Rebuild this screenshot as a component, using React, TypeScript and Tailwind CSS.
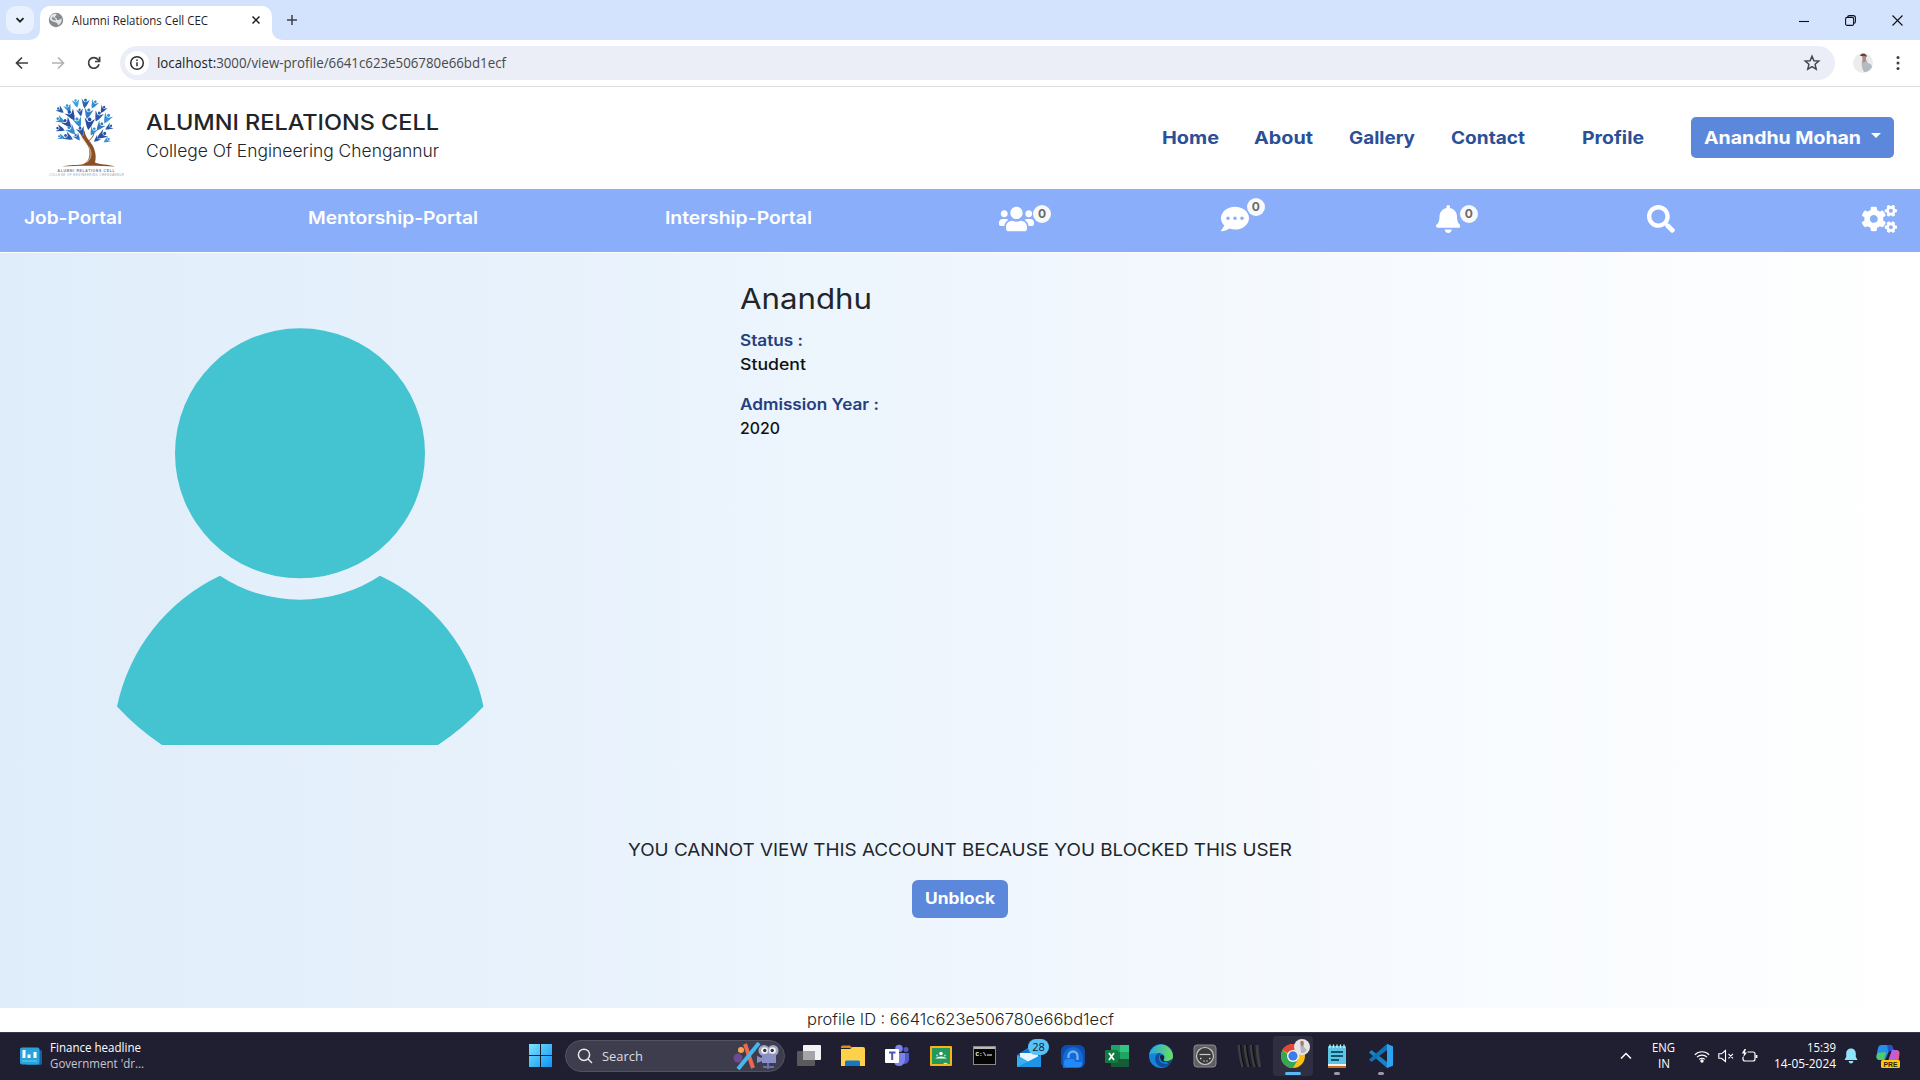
import { useLayoutEffect, useRef, useState } from "react";
import type { ReactNode } from "react";
import { FaBell, FaCogs, FaCommentDots, FaSearch, FaUsers } from "react-icons/fa";

/* Single line of text stretched horizontally to fill its box. */
function Fit({ className = "", children }: { className?: string; children: ReactNode }) {
  const box = useRef<HTMLSpanElement>(null);
  const inner = useRef<HTMLSpanElement>(null);
  const [scale, setScale] = useState(1);
  useLayoutEffect(() => {
    if (box.current && inner.current && inner.current.offsetWidth) {
      const natural = parseFloat(getComputedStyle(inner.current).width);
      setScale(box.current.clientWidth / natural);
    }
  }, []);
  return (
    <span ref={box} className={"block shrink-0 whitespace-nowrap " + className}>
      <span ref={inner} className="inline-block origin-left" style={{ transform: `scaleX(${scale})` }}>
        {children}
      </span>
    </span>
  );
}

function TabStrip() {
  return (
    <div className="flex h-10 items-end bg-[#d3e3fd]">
      <div className="mb-[6px] ml-[6px] flex h-7 w-7 items-center justify-center rounded-[10px] bg-[#e9f1fe]">
        <svg viewBox="0 0 10 10" className="h-[10px] w-[10px]" fill="none" stroke="#1f1f1f" strokeWidth="1.8">
          <path d="M1.5 3.2 5 6.7l3.500-3.500" />
        </svg>
      </div>
      <div className="relative ml-[6px] flex h-[34px] w-[232px] items-center rounded-t-[10px] bg-white pb-[6px]">
        <svg viewBox="0 0 10 10" className="absolute bottom-0 -left-[10px] h-[10px] w-[10px]" fill="#fff">
          <path d="M10 0v10H0A10 10 0 0 0 10 0z" />
        </svg>
        <svg viewBox="0 0 10 10" className="absolute -right-[10px] bottom-0 h-[10px] w-[10px]" fill="#fff">
          <path d="M0 0v10h10A10 10 0 0 1 0 0z" />
        </svg>
        <svg viewBox="0 0 16 16" className="ml-2 h-4 w-4 shrink-0">
          <circle cx="8" cy="8" r="7.200" fill="#868b90" />
          <path d="M3 3.500c2-1.800 4-2 5.500-1.500C9 3.500 7 4 6.500 5.500 8 6 9.500 6.300 9 8c2 0 4-.5 4.500-2 .8 3-.5 6-3.500 7.500C10 12 9.500 11 8 10.500 6 10 3.500 9.500 2 7.500 2 6 2.300 4.500 3 3.500z" fill="#e4e6e8" />
          <path d="M5 4.500C4 5.500 3.500 7 5 8l3 .500C8.500 7 6 6.500 5 4.500z" fill="#868b90" />
        </svg>
        <Fit className="mt-px ml-2 w-[136px] font-['Open_Sans',sans-serif] text-[12.500px] leading-7 text-[#1f1f1f]">Alumni Relations Cell CEC</Fit>
        <svg viewBox="0 0 8 8" className="ml-11 h-2 w-2 shrink-0" stroke="#1f1f1f" strokeWidth="1.500">
          <path d="m.5.5 7 7m0-7-7 7" />
        </svg>
      </div>
      <svg viewBox="0 0 10 10" className="mb-[15px] ml-[15px] h-[10px] w-[10px]" stroke="#3c4043" strokeWidth="1.500">
        <path d="M5 0v10M0 5h10" />
      </svg>
      <div className="mb-[14px] ml-auto flex items-center gap-9 pr-[17px]">
        <svg viewBox="0 0 10 10" className="h-[10px] w-[10px]" stroke="#111" strokeWidth="1.100">
          <path d="M0 5.500h10" />
        </svg>
        <svg viewBox="0 0 11 11" className="h-[11px] w-[11px]" fill="none" stroke="#111" strokeWidth="1.100">
          <rect x=".6" y="2.400" width="8" height="8" rx="1.500" />
          <path d="M2.800 2.400V2q0-1.400 1.500-1.400h4q2.100 0 2.100 2.100v4q0 1.400-1.500 1.600" />
        </svg>
        <svg viewBox="0 0 11 11" className="h-[11px] w-[11px]" stroke="#111" strokeWidth="1.100">
          <path d="m.5.5 10 10m0-10-10 10" />
        </svg>
      </div>
    </div>
  );
}

function Toolbar() {
  return (
    <div className="flex h-[47px] items-center border-b border-[#dcdcde] bg-white pl-[14px]">
      <svg viewBox="0 0 16 16" className="h-4 w-4" fill="none" stroke="#3c4043" strokeWidth="1.700">
        <path d="M14 8H3m5-5.500L2.500 8 8 13.500" />
      </svg>
      <svg viewBox="0 0 16 16" className="ml-5 h-4 w-4" fill="none" stroke="#b1b3b5" strokeWidth="1.700">
        <path d="M2 8h11M8 2.500 13.500 8 8 13.500" />
      </svg>
      <svg viewBox="0 0 16 16" className="ml-5 h-4 w-4" fill="none" stroke="#3c4043" strokeWidth="1.700">
        <path d="M13 9.200A5.300 5.300 0 1 1 12 4.600l1.500 1.600" />
        <path d="M13.600 1.800v4.700H9" />
      </svg>
      <div className="ml-[18px] flex h-[34px] w-[1715px] items-center rounded-full bg-[#ebeef7] pl-[5px]">
        <span className="flex h-6 w-6 items-center justify-center rounded-full bg-white">
          <svg viewBox="0 0 16 16" className="h-4 w-4" fill="none" stroke="#2b2c2e" strokeWidth="1.500">
            <circle cx="8" cy="8" r="6.300" />
            <path d="M8 7.200v4M8 4.600v1.500" />
          </svg>
        </span>
        <Fit className="ml-2 w-[349px] font-['Open_Sans',sans-serif] text-[14px] leading-8 text-[#46494d]">
          <span className="text-[#1f1f1f]">localhost:</span>3000/view-profile/6641c623e506780e66bd1ecf
        </Fit>
        <svg viewBox="0 0 18 18" className="mr-[14px] ml-auto h-[18px] w-[18px]" fill="none" stroke="#44474a" strokeWidth="1.500">
          <path d="m9 2.200 1.900 4.500 4.900.4-3.700 3.200 1.100 4.800L9 12.600l-4.200 2.500 1.100-4.800-3.700-3.200 4.900-.4z" />
        </svg>
      </div>
      <svg viewBox="0 0 20 20" className="ml-[18px] h-5 w-5">
        <circle cx="10" cy="10" r="10" fill="#ececec" />
        <path d="M9 7c2-1 5-1 5 1l1 2c3 1 4 2 4 4-2 4-5 5-8 5-2-3-3-8-2-12z" fill="#b4bac1" />
        <path d="M9 3h4v5l-3 2z" fill="#b58c7c" />
        <path d="M7 3C8-1 14 0 14 4l-2-1z" fill="#5a4644" />
      </svg>
      <svg viewBox="0 0 4 16" className="ml-[23px] h-4 w-1" fill="#3c4043">
        <circle cx="2" cy="2.500" r="1.500" />
        <circle cx="2" cy="8" r="1.500" />
        <circle cx="2" cy="13.500" r="1.500" />
      </svg>
    </div>
  );
}

/* Leaf figures of the crest: x, y, rotation, colour, size */
const figures: [number, number, number, string, number][] = [
  [12, 12, -50, "#2a5caa", 0.9], [20, 10, -20, "#2f8ed0", 1], [28, 5, -10, "#3aa0dc", 1], [37, 5, 10, "#2566b4", 1.1],
  [46, 6, 30, "#2f8ed0", 1], [55, 11, 30, "#2a4fa0", 0.9], [23, 17, -30, "#274f9f", 1.3], [40, 15, 15, "#2f7cc4", 1.2],
  [32, 14, -10, "#2a5caa", 0.9], [50, 18, 25, "#2a5caa", 1.2], [59, 20, 30, "#3994d6", 1.2], [12, 22, -60, "#2f8ed0", 1],
  [19, 25, -40, "#2a4fa0", 1.2], [30, 24, -20, "#2f8ed0", 1.2], [41, 25, 10, "#284d9c", 1.4], [52, 28, 40, "#3178bf", 1.1],
  [61, 29, 60, "#2a5caa", 0.9], [12, 31, -70, "#274f9f", 1], [23, 32, -40, "#328bd0", 1.2], [33, 33, -20, "#2856a5", 1.1],
  [45, 33, 30, "#2f8ed0", 1], [54, 37, 60, "#2a4fa0", 1.2], [13, 39, -70, "#2f8ed0", 0.8], [20, 39, -60, "#2a5caa", 1.1],
  [29, 39, -35, "#2f70ba", 0.9], [59, 42, 60, "#3994d6", 0.8], [49, 41, 50, "#2856a5", 0.8],
];

function Crest() {
  return (
    <svg viewBox="0 0 75 80" className="h-20 w-[75px] shrink-0">
      <g transform="translate(-1 0)">
        {figures.map(([x, y, r, c, s], i) => (
          <g key={i} transform={`translate(${x} ${y}) rotate(${r}) scale(${s})`} fill={c}>
            <circle cx="0" cy="-2.600" r="1.300" />
            <path d="M-3.800-3.500-.8-.8h1.600l3-2.700L2 2 .3 5-1.300 2.600z" />
          </g>
        ))}
        <path d="M32 34c1 7 10 12 9.500 21 0 6-2 9-6 11-5 1.500-14 .5-21.500 2.500 15-1 38-1 53 0-7-2.500-15-1.500-20-4 1-4 1-8-.5-12.500C44.500 44 37 41 36.500 32l-1.500 6z" fill="#8a5127" />
        <path d="M34 40c2 5 9 9 9 16 0 4-2 6-4 8.500" fill="none" stroke="#e8d8ca" strokeWidth=".8" />
        <path d="M40 44c2-3 5-4 6-9" fill="none" stroke="#8a5127" strokeWidth="1" />
      </g>
      <text x="8.500" y="74" textLength="57" fontSize="3.400" fontWeight="600" fill="#6b7a96" fontFamily="Liberation Sans">ALUMNI RELATIONS CELL</text>
      <text x="0" y="78.300" textLength="75" fontSize="2.700" fill="#8c97ae" fontFamily="Liberation Sans">COLLEGE OF ENGINEERING CHENGANNUR</text>
    </svg>
  );
}

function Header() {
  return (
    <header className="flex h-[102px] items-start bg-white pl-[49px] font-['Inter',sans-serif]">
      <div className="pt-[11px]">
        <Crest />
      </div>
      <div className="ml-[22px] pt-[21px]">
        <Fit className="h-7 w-[293px] text-[21.800px] leading-7 font-medium text-[#212529]">ALUMNI RELATIONS CELL</Fit>
        <Fit className="h-[29px] w-[293px] text-[17px] leading-[30px] font-light text-[#212529]">College Of Engineering Chengannur</Fit>
      </div>
      <nav className="mt-[30px] ml-auto flex h-[41px] items-center text-[17.500px] leading-[39px] font-bold text-[#2b5096]">
        <Fit className="h-10 w-[57px]">Home</Fit>
        <Fit className="ml-[35px] h-10 w-[59px]">About</Fit>
        <Fit className="ml-[36px] h-10 w-[66px]">Gallery</Fit>
        <Fit className="ml-[36px] h-10 w-[74px]">Contact</Fit>
        <Fit className="ml-[57px] h-10 w-[62px]">Profile</Fit>
        <button className="ml-[47px] flex h-[41px] w-[203px] items-center rounded-[5px] bg-[#5c88dc] pl-[13px] text-left text-white">
          <Fit className="h-10 w-[157px]">Anandhu Mohan</Fit>
          <span className="mb-1 ml-[10px] border-x-[5px] border-t-[5px] border-x-transparent border-t-white" />
        </button>
      </nav>
      <div className="w-[26px]" />
    </header>
  );
}

function Count({ className }: { className: string }) {
  return (
    <span className={"absolute flex h-[18px] w-[18px] items-center justify-center rounded-full bg-[#f8f9fa] text-[12px] leading-none font-bold text-[#6a6a6a] " + className}>
      0
    </span>
  );
}

function PortalBar() {
  return (
    <div className="flex h-[63px] items-center justify-between bg-[#8aaef9] pr-[23px] pb-[4px] pl-[23.500px] font-['Inter',sans-serif] text-[17.500px] font-semibold text-white">
      <Fit className="w-[98px]">Job-Portal</Fit>
      <Fit className="w-[170px]">Mentorship-Portal</Fit>
      <Fit className="w-[147px]">Intership-Portal</Fit>
      <div className="relative">
        <FaUsers className="h-7 w-[35px]" />
        <Count className="top-0 left-[34px]" />
      </div>
      <div className="relative">
        <FaCommentDots className="h-7 w-7" />
        <Count className="-top-[7px] left-[26px]" />
      </div>
      <div className="relative">
        <FaBell className="h-7 w-[24.500px]" />
        <Count className="top-0 left-[24px]" />
      </div>
      <FaSearch className="h-7 w-7" />
      <FaCogs className="h-7 w-[35px]" />
    </div>
  );
}

function Profile() {
  return (
    <main className="mt-px h-[755px] bg-linear-to-r from-[#dfedfa] via-[#eff6fd] to-white font-['Inter',sans-serif]">
      <div className="flex h-[585px]">
        <div className="w-[740px] pt-[75px] pl-[117px]">
          <svg viewBox="0 0 366 418" className="h-[418px] w-[366px] overflow-visible" fill="#44c3d1">
            <circle cx="183" cy="125.300" r="125" />
            <path d="M103 247.700A145 145 0 0 0 263 247.700 187 187 0 0 1 366.500 378.500 250 250 0 0 1 321 417H45A250 250 0 0 1 0 378.500 187 187 0 0 1 103 247.700z" />
          </svg>
        </div>
        <div className="pt-7 text-[15.500px] leading-6 text-[#111]">
          <Fit className="h-9 w-[132px] text-[28px] leading-[37px] text-[#212529]">Anandhu</Fit>
          <Fit className="mt-3 w-[63px] font-semibold text-[#243f7d]">Status :</Fit>
          <Fit className="w-[66px] font-[450]">Student</Fit>
          <Fit className="mt-4 w-[139px] font-semibold text-[#243f7d]">Admission Year :</Fit>
          <Fit className="w-10 font-[450]">2020</Fit>
        </div>
      </div>
      <div className="-mt-px flex flex-col items-center">
        <Fit className="mt-px w-[664px] text-[17.500px] leading-6 text-[#212529]">YOU CANNOT VIEW THIS ACCOUNT BECAUSE YOU BLOCKED THIS USER</Fit>
        <button className="mt-[18px] flex h-[38px] w-24 justify-center rounded-md bg-[#5c88dc] text-left text-[15.500px] leading-[37px] font-bold text-white">
          <Fit className="w-[70px]">Unblock</Fit>
        </button>
      </div>
    </main>
  );
}

function AppIcon({ children }: { children: ReactNode }) {
  return (
    <svg viewBox="0 0 24 24" className="h-6 w-6 shrink-0">
      {children}
    </svg>
  );
}

function PinnedApps() {
  return (
    <div className="ml-3 flex items-center gap-5">
      <AppIcon>
        <rect x="0" y="7" width="18" height="15" rx="1" fill="#5a5a5e" />
        <rect x="6" y="1" width="18" height="15" rx="1" fill="#f3f3f3" />
        <path d="M6 7h12v9H6z" fill="#a5a5a8" />
      </AppIcon>
      <AppIcon>
        <path d="M0 3q0-1.500 1.500-1.500H9L11.500 4H0z" fill="#d98f10" />
        <path d="M0 5h9l2.500-2H22q2 0 2 2v17H0z" fill="#ffd04a" />
        <path d="M4 22v-4q0-1.500 1.500-1.500h12Q19 16.500 19 18v4z" fill="#1478c8" />
      </AppIcon>
      <AppIcon>
        <circle cx="14" cy="4.500" r="3.800" fill="#7b83eb" />
        <circle cx="21" cy="5.500" r="2.500" fill="#5059c9" />
        <path d="M16 9h8v7q-1 4-5 4z" fill="#5059c9" />
        <path d="M9 9h11v7q-1 6-6 6t-5-5z" fill="#7b83eb" />
        <rect x="0" y="5" width="14" height="14" rx="1" fill="#fff" />
        <path d="M4 8.500h6.500M7.200 8.500V16" stroke="#4b53bc" strokeWidth="2" />
      </AppIcon>
      <AppIcon>
        <rect x="1" y="2" width="22" height="20" rx="1" fill="#f4b41a" />
        <rect x="3" y="4" width="18" height="16" fill="#23985a" />
        <circle cx="12" cy="9.500" r="1.800" fill="#fff" />
        <circle cx="8" cy="11.500" r="1.100" fill="#9ed3b5" />
        <circle cx="16" cy="11.500" r="1.100" fill="#9ed3b5" />
        <path d="M6 14.500q6-4 12 0z" fill="#fff" />
        <path d="M14 20q2.500-2.500 5 0z" fill="#e6e6e6" />
      </AppIcon>
      <AppIcon>
        <rect x=".5" y="2.500" width="22" height="18" fill="#050505" stroke="#8a8a8a" />
        <path d="M1 3h21v2H1z" fill="#b9b9b9" />
        <text x="2.500" y="11.500" fontSize="6" fontWeight="700" fill="#fff" fontFamily="Liberation Mono">C:\</text>
        <path d="M14 11h5" stroke="#fff" />
      </AppIcon>
      <div className="relative h-6 w-6">
        <AppIcon>
          <path d="M0 11 12 3l12 8v12H0z" fill="#1276c8" />
          <path d="M3 9h18v6l-9 5-9-5z" fill="#e9f4fc" />
          <path d="m0 11 12 7 12-7v12H0z" fill="#37aef0" />
          <path d="M0 23 24 11v12z" fill="#1e94e6" />
        </AppIcon>
        <span className="absolute -top-[5px] left-[11px] flex h-4 w-[21px] items-center justify-center rounded-full bg-[#58c1f5] font-['Open_Sans',sans-serif] text-[11px] leading-none text-[#0c2233]">28</span>
      </div>
      <AppIcon>
        <rect x="0" y="1" width="24" height="23" rx="6" fill="#0d4fae" />
        <path d="M2 24V13a10 10 0 0 1 20 0v6q0 4-5 5z" fill="#1668d2" />
        <path d="M7.500 14v-2a4.500 4.500 0 0 1 9 0v4" fill="none" stroke="#6db3f9" strokeWidth="2.300" />
        <path d="M3 21v-2q0-4 4-4h6q0 3 3 3h5v2q0 3-3 3H5q-2 0-2-2z" fill="#2189f8" />
      </AppIcon>
      <AppIcon>
        <rect x="6" y="1" width="18" height="22" rx="1" fill="#21a366" />
        <path d="M15 1h9v7h-9z" fill="#33c481" />
        <path d="M6 8h9v7H6z" fill="#107c41" />
        <path d="M6 15h18v8H6z" fill="#185c37" />
        <rect x="0" y="6" width="13" height="13" rx="1" fill="#107c41" />
        <path d="m4 9 5 7m0-7-5 7" stroke="#fff" strokeWidth="1.800" />
      </AppIcon>
      <AppIcon>
        <defs>
          <linearGradient id="edgeTop" x1="0" x2="1">
            <stop offset="0" stopColor="#2aa5e3" />
            <stop offset="1" stopColor="#6adf5b" />
          </linearGradient>
        </defs>
        <circle cx="12" cy="12" r="12" fill="#1583d8" />
        <path d="M.2 10.500A12 12 0 0 1 24 12c0 4-3.500 5.500-6 5.500s-4-1.200-3-2.300c1.800-3.700-1.500-6.200-4.500-6.200-5 0-9 1-10.300 1.500z" fill="url(#edgeTop)" />
        <path d="M10.500 9C5 10 5 18 9 21c4 4 10 1.500 13-2-5 2-12 1-12-5 0-2 .8-3.500 2-4z" fill="#0b4fa3" />
        <path d="M11 12.500c0-2 2-2.500 3.500-1 1 1 .8 2.500.2 3.700-.8 1.300.8 2.800 4.300 2.300-4 2-8-.5-8-5z" fill="#201f32" />
        <path d="m17 17.800 7-3-.8 3L21 21z" fill="#201f32" opacity=".6" />
      </AppIcon>
      <AppIcon>
        <rect x="1" y="1" width="22" height="22" rx="3" fill="#5f5f61" stroke="#8c8c8c" />
        <circle cx="12" cy="12" r="8.500" fill="#3a3a3c" stroke="#c9c9c9" strokeWidth="1.200" />
        <path d="M6.500 10.500h11" stroke="#c9c9c9" strokeWidth="1.200" />
        <path d="M7 14.500h1.500m2 2.500h1m2 0h1m1.500-2.500h1.500" stroke="#d5d5d5" strokeWidth="1.300" />
      </AppIcon>
      <AppIcon>
        <g fill="none" stroke="#3f3f40" strokeWidth="3">
          <path d="M2 1q1 13 4 22M8 1q1 13 4 22M14 1q1 13 4 22M20 1q.5 13 3 22" />
        </g>
        <g fill="none" stroke="#0e0e12" strokeWidth="1.200">
          <path d="M3.500 1q1 13 4 22M9.500 1q1 13 4 22M15.500 1q1 13 4 22" />
        </g>
      </AppIcon>
      <div className="relative -mx-2 flex h-10 w-10 items-center justify-center rounded bg-[#302f42]">
        <AppIcon>
          <circle cx="12" cy="12" r="12" fill="#fbc116" />
          <path d="M12 12 1.600 6A12 12 0 0 1 22.400 6H12z" fill="#ea4335" />
          <path d="M1.600 6A12 12 0 0 0 12 24l5.200-9H12z" fill="#34a853" />
          <circle cx="12" cy="12" r="6" fill="#fff" />
          <circle cx="12" cy="12" r="4.700" fill="#3b7ded" />
        </AppIcon>
        <svg viewBox="0 0 16 16" className="absolute top-[3px] left-[21px] h-4 w-4">
          <circle cx="8" cy="8" r="8" fill="#e6e4e6" />
          <path d="M6 5h4v3l3 3-3 3H7z" fill="#b5b6c2" />
          <path d="M6 3q3-3 4 1l-2 4z" fill="#a8766b" />
        </svg>
        <span className="absolute bottom-px left-3 h-[3px] w-4 rounded-full bg-[#5bb8f5]" />
      </div>
      <div className="relative h-6 w-6">
        <AppIcon>
          <rect x="3" y="2" width="18" height="20" rx="1" fill="#5cc4e4" />
          <path d="M3 21h18v3H3z" fill="#c96a24" />
          <path d="M3 20h18v2H3z" fill="#f4f4f4" />
          <path d="M5 .5V4m3.500-3.500V4M12 .5V4m3.500-3.500V4M19 .5V4" stroke="#d5eef6" strokeWidth="1.300" />
          <path d="M6 8h12M6 12h12M6 16h8" stroke="#12566e" strokeWidth="1.800" />
        </AppIcon>
        <span className="absolute -bottom-[7px] left-[9px] h-[3px] w-[6px] rounded-full bg-[#9a99a6]" />
      </div>
      <div className="relative h-6 w-6">
        <AppIcon>
          <path d="M18 0 24 2.500v19L18 24 0 8.500 2.500 6 18 18z" fill="#1682c8" />
          <path d="M18 0v6L2.500 18 0 15.500z" fill="#1272b8" />
          <path d="M18 0 24 2.500v19L18 24z" fill="#2ea3ee" />
        </AppIcon>
        <span className="absolute -bottom-[7px] left-[9px] h-[3px] w-[6px] rounded-full bg-[#9a99a6]" />
      </div>
    </div>
  );
}

function Taskbar() {
  return (
    <footer className="flex h-12 items-center border-t border-[#38374a] bg-[#201f32] pb-[2px] font-['Open_Sans',sans-serif] text-white">
      <svg viewBox="0 0 22 18" className="ml-5 h-[18px] w-[22px] shrink-0">
        <path d="M6 3h14q2 0 2 2v11q0 2-2 2H6z" fill="#1262a0" />
        <rect width="19.500" height="17" y=".5" rx="2" fill="#2ba2da" />
        <path d="M4 3v8M9 7.500V11M15 5v6" stroke="#fff" strokeWidth="3" />
        <path d="M2 14h15" stroke="#6bd0f3" />
      </svg>
      <div className="ml-2 w-[94px] text-[12px] leading-4">
        <Fit className="w-[91px]">Finance headline</Fit>
        <Fit className="w-[94px] text-[#c6c6cf]">Government 'dr...</Fit>
      </div>
      <svg viewBox="0 0 23 23" className="ml-[385px] h-[23px] w-[23px] shrink-0">
        <defs>
          <linearGradient id="winLogo" x1="0" y1="0" x2="1" y2="1">
            <stop offset="0" stopColor="#7ce4fd" />
            <stop offset="1" stopColor="#0b93f5" />
          </linearGradient>
        </defs>
        <path d="M0 0h11v11H0zM12 0h11v11H12zM0 12h11v11H0zM12 12h11v11H12z" fill="url(#winLogo)" />
      </svg>
      <div className="ml-[13px] flex h-8 w-[220px] shrink-0 items-center rounded-full border border-[#525162] bg-[#3e3d4e] pl-[11px]">
        <svg viewBox="0 0 16 16" className="h-4 w-4" fill="none" stroke="#e8e8ec" strokeWidth="1.500">
          <circle cx="7" cy="6.800" r="5.600" />
          <path d="m11 11 4 4" />
        </svg>
        <Fit className="ml-[9px] w-[41px] text-[13px] leading-7 text-[#dcdce2]">Search</Fit>
        <svg viewBox="0 0 46 28" className="ml-[90px] h-7 w-[46px] shrink-0">
          <circle cx="8" cy="8" r="3" fill="#f5a64a" />
          <circle cx="5" cy="16" r="4.500" fill="#6d4a94" />
          <path d="m12 2 8 24" stroke="#f0674f" strokeWidth="4" />
          <path d="M26 1 5 27" stroke="#43b8ec" strokeWidth="4" />
          <path d="M35 20v7m-5-2h11" stroke="#686fac" strokeWidth="2" />
          <circle cx="31" cy="8.500" r="5.500" fill="#a3a5c8" />
          <circle cx="40" cy="8.500" r="5.500" fill="#a3a5c8" />
          <path d="M29 12h14v9H29zM24 14l5 2v3l-5 2z" fill="#8a90c4" />
          <circle cx="31.500" cy="8.500" r="3.300" fill="#f5f5f5" />
          <circle cx="39.500" cy="8.500" r="3.300" fill="#f5f5f5" />
          <circle cx="31.800" cy="8.500" r="1.700" fill="#333" />
          <circle cx="39.200" cy="8.500" r="1.700" fill="#333" />
        </svg>
      </div>
      <PinnedApps />
      <svg viewBox="0 0 12 8" className="ml-auto h-2 w-3 shrink-0" fill="none" stroke="#fff" strokeWidth="1.500">
        <path d="m1 6.500 5-5 5 5" />
      </svg>
      <div className="ml-5 flex w-[23px] flex-col items-center text-[12px] leading-4">
        <Fit className="w-[23px]">ENG</Fit>
        <Fit className="w-3">IN</Fit>
      </div>
      <svg viewBox="0 0 16 14" className="ml-[19px] h-[14px] w-4 shrink-0" fill="none" stroke="#fff" strokeWidth="1.200">
        <path d="M.8 5.800a10 10 0 0 1 14.400 0M3 8.200a7 7 0 0 1 10 0M5.200 10.400a4 4 0 0 1 5.600 0" />
        <circle cx="8" cy="12" r="1.100" fill="#fff" />
      </svg>
      <svg viewBox="0 0 16 14" className="ml-2 h-[14px] w-4 shrink-0" fill="none" stroke="#fff" strokeWidth="1.100">
        <path d="M.8 4.800h2.700L7.500 1.500v11L3.500 9.300H.8zM10.500 4.800l4.500 4.500m0-4.500-4.500 4.500" />
      </svg>
      <svg viewBox="0 0 17 14" className="ml-[7px] h-[14px] w-[17px] shrink-0" fill="none" stroke="#fff" strokeWidth="1.200">
        <path d="M6.500 3H12q2 0 2 2v5q0 2-2 2H4q-2 0-2-2V8" />
        <path d="M15.500 6v3" strokeWidth="1.800" />
        <path d="M3.500 0 .8 4.500h2.400L2 8.500l4-5H3.800L5 0z" fill="#fff" stroke="none" />
      </svg>
      <div className="ml-4 flex w-[62px] flex-col items-end text-[12px] leading-4">
        <Fit className="w-[29px]">15:39</Fit>
        <Fit className="w-[62px]">14-05-2024</Fit>
      </div>
      <svg viewBox="0 0 14 16" className="ml-2 h-4 w-[14px] shrink-0" fill="#8fe3fb">
        <path d="M7 .5c3 0 4.800 2.300 4.800 5v3.300l1.700 3.200H.5l1.700-3.200V5.500C2.200 2.800 4 .5 7 .5zM4.500 13h5Q9 15.500 7 15.500T4.500 13z" />
      </svg>
      <svg viewBox="0 0 24 24" className="mr-5 ml-[18px] h-6 w-6 shrink-0">
        <path d="M5 1h9q2 0 2.500 2L18 7h-5L9 16H4q-4 0-3.500-4L2 4q.8-3 3-3z" fill="#2590e8" />
        <path d="M1.500 9 10 8 8 16H4q-4 0-3.500-4z" fill="#54c96b" />
        <path d="M11 1h3q2 0 2.500 2L18 7h-6z" fill="#2455c8" />
        <path d="M16 6h4q4 0 3.500 4l-1 7H12z" fill="#e456a0" />
        <path d="m16 6-3 11h5l3-11z" fill="#b562e0" />
        <rect x="5" y="16" width="19" height="8" rx="1.500" fill="#ffc80f" />
        <text x="7.500" y="22.500" fontSize="6.800" fontWeight="700" fill="#2b2400" textLength="14" fontFamily="Liberation Sans">PRE</text>
      </svg>
    </footer>
  );
}

export default function App() {
  return (
    <div className="flex h-[1080px] w-[1920px] flex-col overflow-hidden bg-white">
      <TabStrip />
      <Toolbar />
      <Header />
      <PortalBar />
      <Profile />
      <div className="flex h-6 justify-center font-['Inter',sans-serif] text-[16px] leading-[23px] font-light text-[#212529]">
        <Fit className="w-[307px]">profile ID : 6641c623e506780e66bd1ecf</Fit>
      </div>
      <Taskbar />
    </div>
  );
}
